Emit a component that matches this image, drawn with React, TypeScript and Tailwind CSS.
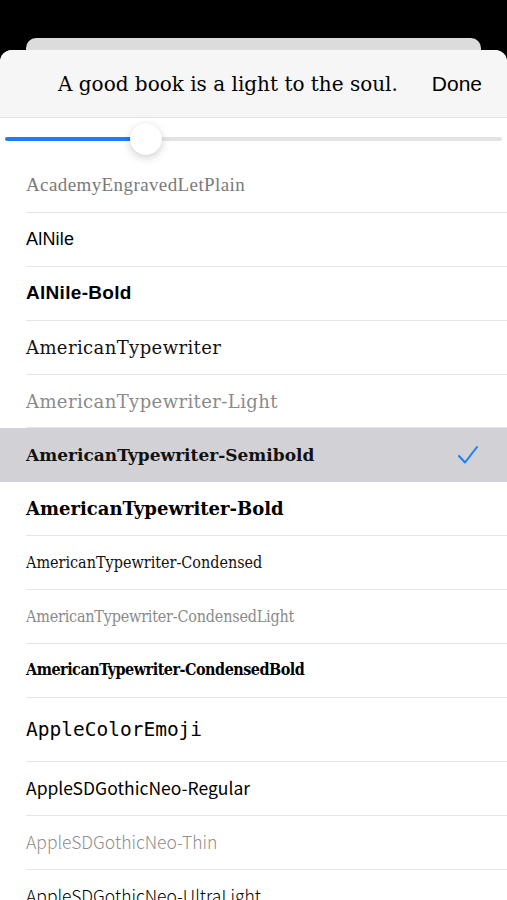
import React from "react";

type Row = { name: string; cls: string; h?: string; selected?: boolean };

const rows: Row[] = [
  { name: "AcademyEngravedLetPlain", cls: "font-['Liberation_Serif',serif] text-[19px] text-[#7a7a7a] tracking-[0.4px]" },
  { name: "AlNile", cls: "font-['Liberation_Sans',sans-serif] text-[18px] text-black tracking-[0.2px]" },
  { name: "AlNile-Bold", cls: "font-['Liberation_Sans',sans-serif] text-[19px] font-bold text-black tracking-[0.3px]" },
  { name: "AmericanTypewriter", cls: "font-['DejaVu_Serif',serif] text-[18px] text-[#111] tracking-[0.4px]" },
  { name: "AmericanTypewriter-Light", cls: "font-['DejaVu_Serif',serif] font-light text-[18px] text-[#8a8a8a] tracking-[0.4px]" },
  { name: "AmericanTypewriter-Semibold", cls: "font-['DejaVu_Serif',serif] font-semibold text-[17px] text-[#111]", selected: true },
  { name: "AmericanTypewriter-Bold", cls: "font-['DejaVu_Serif',serif] font-bold text-[18px] text-black" },
  { name: "AmericanTypewriter-Condensed", cls: "font-['DejaVu_Serif_Condensed','DejaVu_Serif',serif] [font-stretch:condensed] text-[16px] text-[#111]" },
  { name: "AmericanTypewriter-CondensedLight", cls: "font-['DejaVu_Serif_Condensed','DejaVu_Serif',serif] [font-stretch:condensed] font-light text-[16px] text-[#8a8a8a] tracking-[-0.2px]" },
  { name: "AmericanTypewriter-CondensedBold", cls: "font-['DejaVu_Serif_Condensed','DejaVu_Serif',serif] [font-stretch:condensed] font-bold text-[16px] text-black tracking-[-0.5px]" },
  { name: "AppleColorEmoji", cls: "font-['DejaVu_Sans_Mono',monospace] text-[19.5px] text-black", h: "h-[64px]" },
  { name: "AppleSDGothicNeo-Regular", cls: "font-['Noto_Sans_CJK_KR',sans-serif] text-[17.5px] text-black" },
  { name: "AppleSDGothicNeo-Thin", cls: "font-['Noto_Sans_CJK_KR',sans-serif] font-light text-[17.5px] text-[#8e8e8e]" },
  { name: "AppleSDGothicNeo-UltraLight", cls: "font-['Noto_Sans_CJK_KR',sans-serif] font-light text-[17.5px] text-black" },
];

export default function App() {
  return (
    <div className="w-[507px] h-[900px] overflow-hidden bg-black flex flex-col pt-[38px]">
      <div className="mx-[26px] h-[12px] shrink-0 rounded-t-[10px] bg-[#dcdcdc]" />
      <div className="flex-1 flex flex-col rounded-t-[12px] bg-white overflow-hidden">
        <div className="h-[68px] shrink-0 bg-[#f6f6f6] border-b border-[#e1e1e1] flex items-center pl-[58px] pr-[25px]">
          <div className="flex-1 font-['DejaVu_Serif',serif] text-[20px] text-black whitespace-nowrap">
            A good book is a light to the soul.
          </div>
          <div className="font-['Liberation_Sans',sans-serif] text-[21px] text-black">Done</div>
        </div>
        <div className="h-[41px] shrink-0 flex items-center px-[5px]">
          <div className="relative flex-1 h-[4px] rounded-full bg-[#e3e3e3]">
            <div className="h-full w-[141px] rounded-full bg-[#1a7ef6]" />
            <div className="absolute left-[125px] top-[-14px] w-[32px] h-[32px] rounded-full bg-white shadow-[0_3px_8px_rgba(0,0,0,0.18),0_0_1px_rgba(0,0,0,0.1)]" />
          </div>
        </div>
        <div className="flex flex-col">
          {rows.map((r) => (
            <div
              key={r.name}
              className={`shrink-0 flex items-center pl-[26px] ${r.h ?? "h-[53.9px]"} ${r.selected ? "bg-[#d1d1d6]" : ""}`}
            >
              <div
                className={`flex-1 h-full flex items-center pr-[28px] ${r.selected ? "" : "border-b border-[#e6e6e6]"}`}
              >
                <span className={`flex-1 whitespace-nowrap ${r.cls}`}>{r.name}</span>
                {r.selected && (
                  <svg width="22" height="20" viewBox="0 0 22 20" fill="none">
                    <path d="M2 11 L8 17.5 L20 2" stroke="#1a7ef6" strokeWidth="2" strokeLinecap="round" strokeLinejoin="round" />
                  </svg>
                )}
              </div>
            </div>
          ))}
        </div>
      </div>
    </div>
  );
}
